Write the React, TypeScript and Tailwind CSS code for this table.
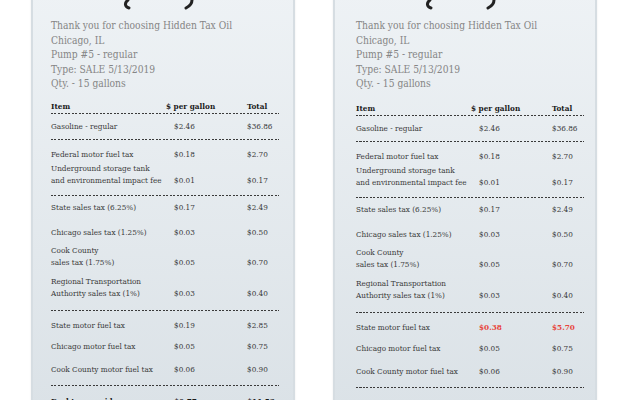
import React from 'react';

type Row = {
  item: string[];
  per: string;
  total: string;
  h: string;
  red?: boolean;
};

type Group = { rows: Row[]; lineMt: string };

const groups: Group[] = [
  {
    lineMt: 'mt-[7px]',
    rows: [{ item: ['Gasoline - regular'], per: '$2.46', total: '$36.86', h: 'h-[18px]' }],
  },
  {
    lineMt: 'mt-[9px]',
    rows: [
      { item: ['Federal motor fuel tax'], per: '$0.18', total: '$2.70', h: 'h-[20px]' },
      { item: ['Underground storage tank', 'and environmental impact fee'], per: '$0.01', total: '$0.17', h: 'h-[26px]' },
    ],
  },
  {
    lineMt: 'mt-[11px]',
    rows: [
      { item: ['State sales tax (6.25%)'], per: '$0.17', total: '$2.49', h: 'h-[17px]' },
      { item: ['Chicago sales tax (1.25%)'], per: '$0.03', total: '$0.50', h: 'h-[25px]' },
      { item: ['Cook County', 'sales tax (1.75%)'], per: '$0.05', total: '$0.70', h: 'h-[30px]' },
      { item: ['Regional Transportation', 'Authority sales tax (1%)'], per: '$0.03', total: '$0.40', h: 'h-[31px]' },
    ],
  },
  {
    lineMt: 'mt-[10px]',
    rows: [
      { item: ['State motor fuel tax'], per: '$0.19', total: '$2.85', h: 'h-[20px]', red: true },
      { item: ['Chicago motor fuel tax'], per: '$0.05', total: '$0.75', h: 'h-[21px]' },
      { item: ['Cook County motor fuel tax'], per: '$0.06', total: '$0.90', h: 'h-[23px]' },
    ],
  },
];

function Dashes({ className = '' }: { className?: string }) {
  return (
    <div
      className={`h-px w-full bg-[repeating-linear-gradient(90deg,#3a3a3a_0_2px,transparent_2px_3.5px)] ${className}`}
    />
  );
}

function Receipt({ hiked }: { hiked?: boolean }) {
  const pad = hiked ? 'pl-[21px] pr-[15px]' : 'pl-[18px] pr-[18px]';
  return (
    <div
      className={`relative w-[264px] h-[420px] -mt-[10px] border-2 border-[#d6dde2] bg-gradient-to-b from-[#eef2f5] to-[#dbe2e7] shadow-[0_0_2px_rgba(0,0,0,0.08)] ${pad}`}
    >
      {/* logo bottom peeking out */}
      <svg className="absolute left-[89px] top-[8px]" width="76" height="10" viewBox="0 0 76 10">
        <path d="M6 0 C2 3 3 7 7 8" stroke="#222" strokeWidth="3" fill="none" strokeLinecap="round" />
        <path d="M70 0 C70 4 68 6 64 8" stroke="#222" strokeWidth="3" fill="none" strokeLinecap="round" />
      </svg>

      <div className="pt-[27px] text-[10.2px] leading-[14.5px] text-[#858585] whitespace-nowrap">
        <div>Thank you for choosing Hidden Tax Oil</div>
        <div>Chicago, IL</div>
        <div>Pump #5 - regular</div>
        <div>Type: SALE 5/13/2019</div>
        <div>Qty. - 15 gallons</div>
      </div>

      <div className={`${hiked ? 'mt-[2px]' : 'mt-0'} w-[228px] text-[8.1px] leading-[11.5px] text-[#3a3a3a] whitespace-nowrap`}>
        <div className="grid h-[20.5px] grid-cols-[115px_81px_1fr] items-end font-bold text-[#1a1a1a]">
          <span>Item</span>
          <span>$ per gallon</span>
          <span>Total</span>
        </div>
        <Dashes className="mt-px" />

        {groups.map((g, gi) => (
          <div key={gi}>
            {g.rows.map((r, ri) => {
              const red = hiked && r.red;
              return (
                <div key={ri} className={`grid grid-cols-[115px_81px_1fr] items-end ${r.h}`}>
                  <span>
                    {r.item.map((t) => (
                      <div key={t}>{t}</div>
                    ))}
                  </span>
                  <span className={`pl-2 ${red ? 'font-bold text-[#e8453c]' : ''}`}>{red ? '$0.38' : r.per}</span>
                  <span className={red ? 'font-bold text-[#e8453c]' : ''}>{red ? '$5.70' : r.total}</span>
                </div>
              );
            })}
            <Dashes className={g.lineMt} />
          </div>
        ))}

        <div className="grid h-[21px] grid-cols-[115px_81px_1fr] items-end font-bold text-[#1a1a1a]">
          <span>Fuel taxes paid</span>
          <span className={`pl-2 ${hiked ? 'text-[#e8453c]' : ''}`}>{hiked ? '$0.96' : '$0.77'}</span>
          <span className={hiked ? 'text-[#e8453c]' : ''}>{hiked ? '$14.31' : '$11.53'}</span>
        </div>
      </div>
    </div>
  );
}

export default function App() {
  return (
    <div className="h-[400px] w-[630px] overflow-hidden bg-white font-['DejaVu_Serif',serif] font-stretch-condensed">
      <div className="flex gap-[38px] pl-[31px]">
        <Receipt />
        <Receipt hiked />
      </div>
    </div>
  );
}
